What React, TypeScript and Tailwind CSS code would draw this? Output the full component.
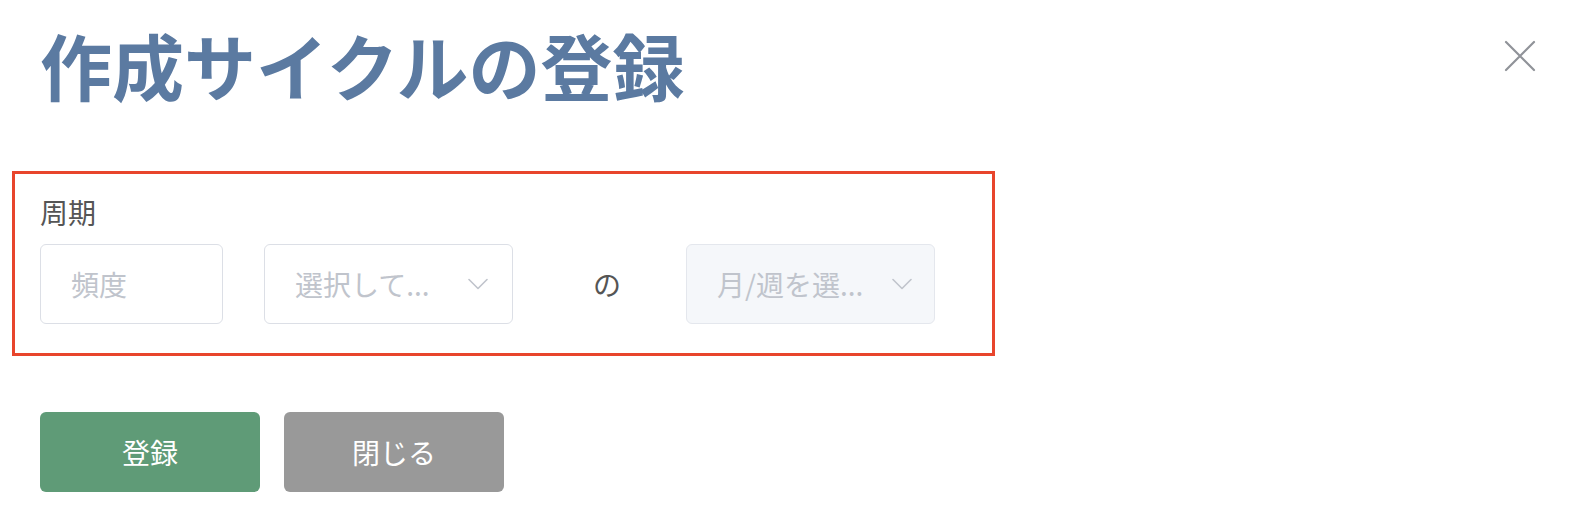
import React from "react";

function Chevron() {
  return (
    <svg width="20" height="12" viewBox="0 0 20 12" fill="none" className="shrink-0">
      <path d="M1 1.5 L10 10.5 L19 1.5" stroke="#c0c4cc" strokeWidth="1.6" strokeLinecap="round" strokeLinejoin="round" />
    </svg>
  );
}

export default function App() {
  return (
    <div className="w-[1580px] h-[530px] bg-white font-['Noto_Sans_CJK_JP','Noto_Sans',sans-serif] overflow-hidden">
      <div className="flex justify-between items-start pl-10 pr-[44px] pt-[28px]">
        <h1 className="text-[72px] leading-[72px] font-bold text-[#5b7aa1] tracking-[0px]">作成サイクルの登録</h1>
        <button className="mt-[12px]" aria-label="close">
          <svg width="32" height="32" viewBox="0 0 32 32" fill="none">
            <path d="M2 2 L30 30 M30 2 L2 30" stroke="#909399" strokeWidth="2.2" strokeLinecap="round" />
          </svg>
        </button>
      </div>

      <div className="ml-[12px] mt-[71px] w-[983px] border-[3px] border-[#e8452c] pl-[25px] pt-[24px] pb-[29px]">
        <div className="text-[28px] leading-[28px] text-[#555]">周期</div>
        <div className="flex items-center mt-[18px]">
          <div className="w-[183px] h-[80px] border border-[#dcdfe6] rounded-[6px] flex items-center pl-[30px] text-[28px] text-[#c0c4cc]">
            頻度
          </div>
          <div className="ml-[41px] w-[249px] h-[80px] border border-[#dcdfe6] rounded-[6px] flex items-center justify-between pl-[30px] pr-[24px] text-[28px] text-[#c0c4cc]">
            <span>選択して...</span>
            <Chevron />
          </div>
          <span className="ml-[80px] text-[28px] text-[#555]">の</span>
          <div className="ml-[65px] w-[249px] h-[80px] border border-[#e4e7ed] bg-[#f5f7fa] rounded-[6px] flex items-center justify-between pl-[30px] pr-[22px] text-[28px] text-[#c0c4cc]">
            <span>月/週を選...</span>
            <Chevron />
          </div>
        </div>
      </div>

      <div className="flex gap-[24px] pl-10 mt-[56px]">
        <button className="w-[220px] h-[80px] rounded-[6px] bg-[#5f9b77] text-white text-[28px]">登録</button>
        <button className="w-[220px] h-[80px] rounded-[6px] bg-[#999999] text-white text-[28px]">閉じる</button>
      </div>
    </div>
  );
}
